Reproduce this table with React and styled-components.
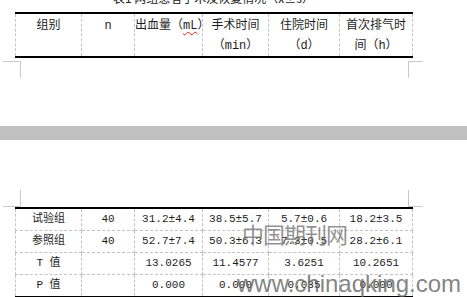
import styled, { createGlobalStyle } from "styled-components";

const Global = createGlobalStyle`
  html, body {
    margin: 0;
    padding: 0;
    background: #fff;
  }
  body {
    width: 467px;
    height: 297px;
    overflow: hidden;
    font-family: "Noto Sans CJK SC", sans-serif;
  }
`;

const COLS = [66, 53, 68, 66, 71, 73];

const HEAD = [
  ["组别"],
  ["n"],
  ["出血量（", <Squiggle key="ml">mL</Squiggle>, "）"],
  ["手术时间", "（min）"],
  ["住院时间", "（d）"],
  ["首次排气时", "间（h）"],
];

const ROWS = [
  ["试验组", "40", "31.2±4.4", "38.5±5.7", "5.7±0.6", "18.2±3.5"],
  ["参照组", "40", "52.7±7.4", "50.3±6.3", "7.3±0.5", "28.2±6.1"],
  ["T 值", "", "13.0265", "11.4577", "3.6251", "10.2651"],
  ["P 值", "", "0.000", "0.000", "0.035", "0.000"],
];

function Squiggle({ children }) {
  return <Wavy>{children}</Wavy>;
}

function Cols() {
  return (
    <colgroup>
      {COLS.map((w, i) => (
        <col key={i} style={{ width: w }} />
      ))}
    </colgroup>
  );
}

export default function App() {
  return (
    <>
      <Global />
      <Doc>
        <Page $h={126}>
          <Caption>表1 两组患者手术及恢复情况（x±s）</Caption>
          <Table $top={8}>
            <Cols />
            <tbody>
              <tr>
                {HEAD.map((h, i) => (
                  <HeadCell key={i}>
                    {i === 2 ? (
                      <Line>{h}</Line>
                    ) : (
                      h.map((t, j) => <Line key={j}>{t}</Line>)
                    )}
                  </HeadCell>
                ))}
              </tr>
            </tbody>
          </Table>
          <Marks $top={3}>
            <Corner $side="left" $edge="top" />
            <Corner $side="right" $edge="top" />
          </Marks>
        </Page>

        <Gap />

        <Page>
          <Marks $top={50}>
            <Corner $side="left" $edge="bottom" />
            <Corner $side="right" $edge="bottom" />
          </Marks>
          <Table $top={0}>
            <Cols />
            <tbody>
              {ROWS.map((r, i) => (
                <tr key={i}>
                  {r.map((c, j) => (
                    <BodyCell key={j} $last={i === ROWS.length - 1}>
                      {c}
                    </BodyCell>
                  ))}
                </tr>
              ))}
            </tbody>
          </Table>
        </Page>

        <MarkCn>中国期刊网</MarkCn>
        <MarkUrl>www.chinaqking.com</MarkUrl>
      </Doc>
    </>
  );
}

const Doc = styled.div`
  position: relative;
  width: 467px;
  height: 297px;
  overflow: hidden;
  display: flex;
  flex-direction: column;
`;

const Page = styled.section`
  flex: ${(p) => (p.$h ? "0 0 auto" : "1 1 auto")};
  height: ${(p) => (p.$h ? `${p.$h}px` : "auto")};
  background: #fff;
  overflow: hidden;
  display: flex;
  flex-direction: column;
`;

const Gap = styled.div`
  flex: 0 0 14px;
  background: #c0c0c0;
`;

const Caption = styled.div`
  margin: -8px 0 0 15px;
  width: 397px;
  height: 12px;
  line-height: 12px;
  font-size: 12px;
  color: #222;
  text-align: center;
  white-space: nowrap;
`;

const Table = styled.table`
  flex: 0 0 auto;
  margin: ${(p) => p.$top}px 0 0 15px;
  width: 397px;
  table-layout: fixed;
  border-collapse: collapse;
  border-top: 2px solid #000;
  border-bottom: 2px solid #000;
`;

const HeadCell = styled.td`
  padding: 2px 0 0;
  height: 38px;
  vertical-align: top;
  text-align: center;
  border-left: 1px dashed #c4c4c4;
  border-right: 1px dashed #c4c4c4;
  font-family: "Liberation Mono", "Noto Sans CJK SC", monospace;
  font-size: 12px;
  color: #1e1e1e;
`;

const Line = styled.div`
  height: 20px;
  line-height: 20px;
  white-space: nowrap;
`;

const Wavy = styled.span`
  text-decoration: underline wavy #e02020;
  text-decoration-thickness: 1px;
  text-underline-offset: 2px;
`;

const BodyCell = styled.td`
  padding: 0;
  height: 21px;
  line-height: 21px;
  text-align: center;
  white-space: nowrap;
  border-left: 1px dashed #c4c4c4;
  border-right: 1px dashed #c4c4c4;
  border-bottom: ${(p) => (p.$last ? "2px solid #000" : "1px dashed #c4c4c4")};
  font-family: "Liberation Mono", "Noto Sans CJK SC", monospace;
  font-size: 11px;
  color: #1e1e1e;
`;

const Marks = styled.div`
  margin-top: ${(p) => p.$top}px;
  height: 17px;
  flex: 0 0 17px;
  display: flex;
  justify-content: space-between;
  padding: 0 44px 0 3px;
`;

const Corner = styled.div`
  box-sizing: border-box;
  width: ${(p) => (p.$side === "left" ? 18 : 15)}px;
  height: 17px;
  ${(p) => (p.$edge === "top" ? "border-top" : "border-bottom")}: 1px solid #c8c8c8;
  ${(p) => (p.$side === "left" ? "border-right" : "border-left")}: 1px solid #c8c8c8;
`;

const MarkCn = styled.div`
  position: absolute;
  left: 242px;
  top: 220px;
  font-size: 22px;
  line-height: 26px;
  letter-spacing: -1px;
  color: rgba(110, 110, 110, 0.75);
  white-space: nowrap;
`;

const MarkUrl = styled.div`
  position: absolute;
  left: 237px;
  top: 270px;
  font-family: "Liberation Sans", Arial, sans-serif;
  font-size: 24px;
  line-height: 28px;
  color: rgba(100, 100, 100, 0.8);
  white-space: nowrap;
`;
